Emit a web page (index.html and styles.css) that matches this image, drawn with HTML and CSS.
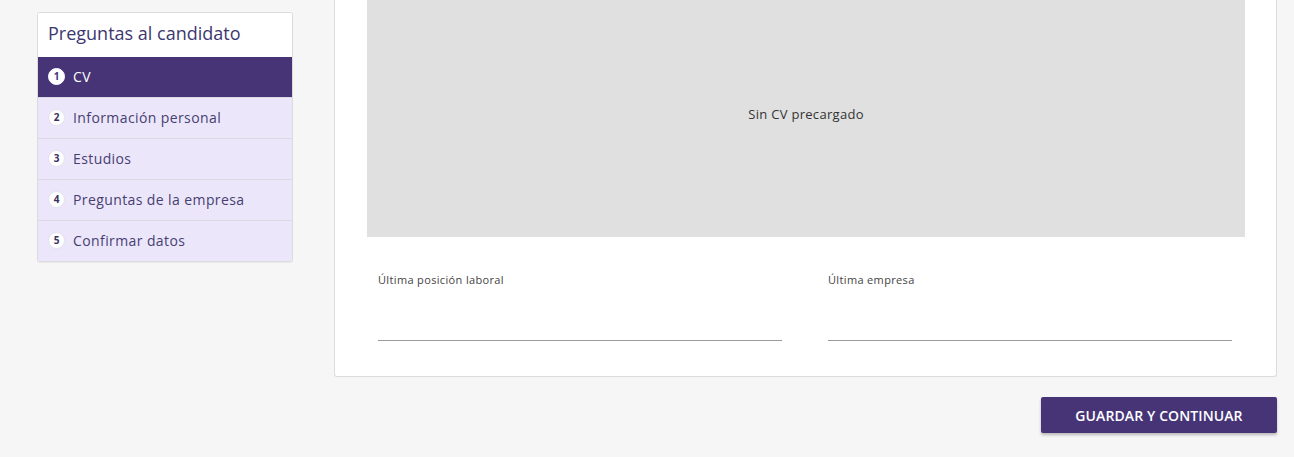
FILE: index.html
```html
<!DOCTYPE html>
<html lang="es">
<head>
<meta charset="utf-8">
<title>Preguntas al candidato</title>
<link rel="stylesheet" href="styles.css">
</head>
<body>
<div class="page">
  <aside class="steps">
    <div class="steps-title">Preguntas al candidato</div>
    <ul class="step-list">
      <li class="step active"><span class="num">1</span><span>CV</span></li>
      <li class="step"><span class="num">2</span><span>Información personal</span></li>
      <li class="step"><span class="num">3</span><span>Estudios</span></li>
      <li class="step"><span class="num">4</span><span>Preguntas de la empresa</span></li>
      <li class="step"><span class="num">5</span><span>Confirmar datos</span></li>
    </ul>
  </aside>
  <main class="main">
    <section class="card">
      <div class="cv-box">Sin CV precargado</div>
      <div class="fields">
        <label class="field">
          <span class="field-label">Última posición laboral</span>
          <span class="field-input"></span>
        </label>
        <label class="field">
          <span class="field-label">Última empresa</span>
          <span class="field-input"></span>
        </label>
      </div>
    </section>
    <div class="actions">
      <button class="btn-primary" type="button">GUARDAR Y CONTINUAR</button>
    </div>
  </main>
</div>
</body>
</html>
```

FILE: styles.css
```css
* { box-sizing: border-box; }
html, body { margin: 0; padding: 0; }
body {
  background: #f6f6f6;
  font-family: "Open Sans", "Liberation Sans", sans-serif;
  color: #333;
  height: 457px;
  overflow: hidden;
}
.page {
  display: flex;
  align-items: flex-start;
  padding-left: 37px;
  gap: 41px;
}
.steps {
  width: 256px;
  margin-top: 12px;
  background: #fff;
  border: 1px solid #dcdcdc;
  border-radius: 3px;
  overflow: hidden;
  box-shadow: 0 1px 1px rgba(0,0,0,0.06);
}
.steps-title {
  height: 44px;
  padding: 0 10px 4px;
  display: flex;
  align-items: center;
  font-size: 18px;
  color: #3c3770;
  background: #fff;
}
.step-list { list-style: none; margin: 0; padding: 0; }
.step {
  height: 41px;
  display: flex;
  align-items: center;
  gap: 8px;
  padding: 0 10px 2px;
  background: #ece6fa;
  border-top: 1px solid #dcd8e4;
  font-size: 14px;
  letter-spacing: 0.4px;
  color: #463f72;
}
.step.active {
  height: 40px;
  background: #463476;
  color: #fff;
  border-top: none;
}
.num {
  width: 17px;
  height: 17px;
  border-radius: 50%;
  background: #fff;
  border: 1px solid #e4e0ec;
  color: #3a3160;
  font-size: 10px;
  font-weight: 700;
  letter-spacing: 0;
  display: flex;
  align-items: center;
  justify-content: center;
  flex: none;
}
.step.active .num { border-color: #fff; color: #463476; }
.main { width: 943px; }
.card {
  background: #fff;
  border: 1px solid #dcdcdc;
  border-top: none;
  border-radius: 0 0 3px 3px;
  padding: 0 31px 35px 32px;
}
.cv-box {
  height: 237px;
  padding-bottom: 9px;
  background: #e0e0e0;
  display: flex;
  align-items: center;
  justify-content: center;
  font-size: 13px;
  letter-spacing: 0.3px;
  color: #333;
}
.fields {
  display: flex;
  gap: 46px;
  padding: 35px 13px 0 11px;
}
.field {
  flex: 1;
  display: flex;
  flex-direction: column;
}
.field-label {
  font-size: 11px;
  letter-spacing: 0.35px;
  color: #444;
  line-height: 15px;
}
.field-input {
  height: 54px;
  border-bottom: 1px solid #9a9a9a;
}
.actions {
  display: flex;
  justify-content: flex-end;
  padding-top: 20px;
}
.btn-primary {
  width: 236px;
  height: 36px;
  border: none;
  border-radius: 2px;
  background: #463476;
  color: #fff;
  font-family: "Open Sans", "Liberation Sans", sans-serif;
  font-size: 14px;
  font-weight: 600;
  letter-spacing: 0.1px;
  box-shadow: 0 2px 3px rgba(0,0,0,0.25);
}
```
